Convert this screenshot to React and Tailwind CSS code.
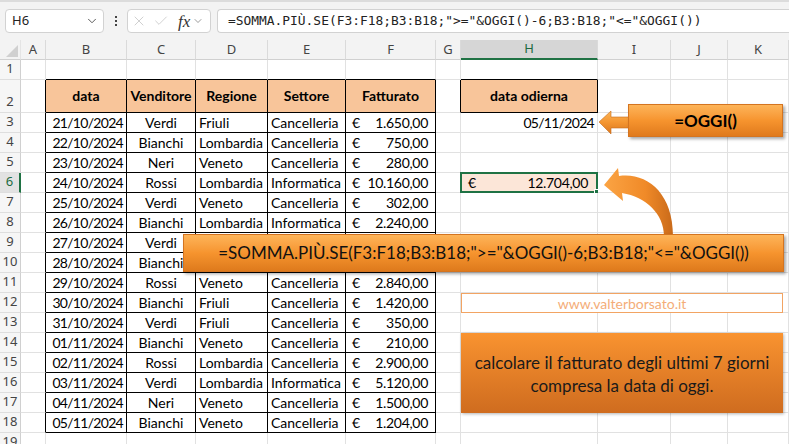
import React from "react";
import { ChevronDown, X, Check } from "lucide-react";

const COLS = ["", "A", "B", "C", "D", "E", "F", "G", "H", "I", "J", "K"];

const DATA = [
  ["21/10/2024", "Verdi", "Friuli", "Cancelleria", "1.650,00"],
  ["22/10/2024", "Bianchi", "Lombardia", "Cancelleria", "750,00"],
  ["23/10/2024", "Neri", "Veneto", "Cancelleria", "280,00"],
  ["24/10/2024", "Rossi", "Lombardia", "Informatica", "10.160,00"],
  ["25/10/2024", "Verdi", "Veneto", "Cancelleria", "302,00"],
  ["26/10/2024", "Bianchi", "Lombardia", "Informatica", "2.240,00"],
  ["27/10/2024", "Verdi", "Veneto", "Cancelleria", "980,00"],
  ["28/10/2024", "Bianchi", "Lombardia", "Cancelleria", "1.100,00"],
  ["29/10/2024", "Rossi", "Veneto", "Cancelleria", "2.840,00"],
  ["30/10/2024", "Bianchi", "Friuli", "Cancelleria", "1.420,00"],
  ["31/10/2024", "Verdi", "Friuli", "Cancelleria", "350,00"],
  ["01/11/2024", "Bianchi", "Veneto", "Cancelleria", "210,00"],
  ["02/11/2024", "Rossi", "Lombardia", "Cancelleria", "2.900,00"],
  ["03/11/2024", "Verdi", "Lombardia", "Informatica", "5.120,00"],
  ["04/11/2024", "Neri", "Veneto", "Cancelleria", "1.500,00"],
  ["05/11/2024", "Bianchi", "Veneto", "Cancelleria", "1.204,00"],
];

const HEADERS = ["data", "Venditore", "Regione", "Settore", "Fatturato"];

function inBox(r, c) {
  return (r >= 2 && r <= 18 && c >= 2 && c <= 6) || (r === 2 && c === 8);
}

function cellContent(r, c) {
  if (r === 2 && c >= 2 && c <= 6) {
    return (
      <div className="w-full h-full flex items-center justify-center font-bold">
        {HEADERS[c - 2]}
      </div>
    );
  }
  if (r === 2 && c === 8) {
    return (
      <div className="w-full h-full flex items-center justify-center font-bold">
        data odierna
      </div>
    );
  }
  if (r === 3 && c === 8) {
    return (
      <div className="w-full h-full flex items-center justify-end pr-[3px] tracking-[-0.7px]">
        05/11/2024
      </div>
    );
  }
  if (r === 6 && c === 8) {
    return (
      <div className="w-full h-full flex items-center justify-between pl-[7px] pr-[9px]">
        <span>€</span>
        <span className="tracking-[-0.3px]">12.704,00</span>
      </div>
    );
  }
  if (r >= 3 && r <= 18 && c >= 2 && c <= 6) {
    const row = DATA[r - 3];
    if (c === 2)
      return (
        <div className="w-full h-full flex items-center justify-end pr-[3px] tracking-[-0.7px]">
          {row[0]}
        </div>
      );
    if (c === 3)
      return <div className="w-full h-full flex items-center justify-center">{row[1]}</div>;
    if (c === 4)
      return <div className="w-full h-full flex items-center pl-[3px]">{row[2]}</div>;
    if (c === 5)
      return <div className="w-full h-full flex items-center pl-[3px]">{row[3]}</div>;
    if (c === 6)
      return (
        <div className="w-full h-full flex items-center justify-between pl-[6px] pr-[7px]">
          <span>€</span>
          <span className="tracking-[-0.3px]">{row[4]}</span>
        </div>
      );
  }
  return null;
}

function Grid() {
  const cells = [];
  COLS.forEach((name, c) => {
    const isH = c === 8;
    cells.push(
      <div
        key={"h" + c}
        className={
          "h-[20px] flex items-center justify-center text-[13px] font-['Noto_Sans',sans-serif] border-r " +
          (c === 0 ? "border-r-[#e4e4e4] bg-[#f3f3f3] relative " : "border-r-[#dadada] ") +
          (isH
            ? "bg-[#d6d6d6] text-[#1d6a3f] border-b-2 border-b-[#1f7244]"
            : "bg-[#f3f3f3] text-[#444] border-b border-b-[#d0d0d0]")
        }
      >
        {c === 0 ? (
          <svg className="absolute right-[2px] bottom-[2px]" width="12" height="12" viewBox="0 0 12 12">
            <polygon points="12,0 12,12 0,12" fill="#d0d0d0" />
          </svg>
        ) : (
          name
        )}
      </div>
    );
  });

  for (let r = 1; r <= 19; r++) {
    const h = r === 2 ? "h-[33px]" : "h-[20px]";
    for (let c = 0; c < 12; c++) {
      if (c === 0) {
        const sel = r === 6;
        cells.push(
          <div
            key={r + "-" + c}
            className={
              h +
              " flex items-end justify-center pb-[1px] text-[13px] font-['Noto_Sans',sans-serif] border-b border-b-[#dedede] " +
              (sel
                ? "bg-[#e2e2e2] text-[#1d6a3f] border-r-2 border-r-[#1f7244]"
                : "bg-[#f6f6f6] text-[#444] border-r border-r-[#d0d0d0]")
            }
          >
            {r}
          </div>
        );
        continue;
      }
      const blackR = inBox(r, c) || inBox(r, c + 1);
      const blackB = inBox(r, c) || inBox(r + 1, c);
      let bg = "bg-white";
      if ((r === 2 && c >= 2 && c <= 6) || (r === 2 && c === 8)) bg = "bg-[#f8c59a]";
      if (r === 6 && c === 8) bg = "bg-[#fce6d8]";
      cells.push(
        <div
          key={r + "-" + c}
          className={
            h +
            " relative border-r border-b text-[14px] leading-none text-black whitespace-nowrap " +
            bg +
            " " +
            (blackR ? "border-r-black" : "border-r-[#e1e1e1]") +
            " " +
            (blackB ? "border-b-black" : "border-b-[#e1e1e1]")
          }
        >
          {cellContent(r, c)}
          {r === 6 && c === 8 && (
            <>
              <div className="absolute -left-[1px] -top-[1px] -right-[1px] -bottom-[1px] border-2 border-[#1f7244]" />
              <div className="absolute -right-[3px] -bottom-[3px] w-[6px] h-[6px] bg-[#1f7244] border border-white" />
            </>
          )}
        </div>
      );
    }
  }

  return (
    <div className="grid grid-cols-[21px_25px_81px_69px_72px_78px_90px_25px_137px_73px_57px_61px] font-['Lato',sans-serif]">
      {cells}
    </div>
  );
}

function FormulaBar() {
  return (
    <div className="h-[40px] bg-[#f3f3f3] flex flex-col">
      <div className="h-[2px] bg-[#dcdcdc]" />
      <div className="flex items-start pt-[7px]">
        <div className="ml-[5px] w-[99px] h-[24px] bg-white border border-[#d2d2d2] rounded-[4px] flex items-center justify-between pl-[6px] pr-[4px] text-[13px] text-[#222] font-['Noto_Sans',sans-serif]">
          <span>H6</span>
          <ChevronDown size={14} strokeWidth={1.5} color="#444" />
        </div>
        <div className="ml-[11px] h-[24px] flex flex-col justify-center gap-[2px]">
          <div className="w-[2px] h-[2px] bg-[#444]" />
          <div className="w-[2px] h-[2px] bg-[#444]" />
          <div className="w-[2px] h-[2px] bg-[#444]" />
        </div>
        <div className="ml-[10px] w-[84px] h-[24px] bg-white border border-[#d2d2d2] rounded-[4px] flex items-center pl-[3px]">
          <X size={16} strokeWidth={1.2} color="#c4c4c4" />
          <Check size={16} strokeWidth={1.2} color="#c4c4c4" className="ml-[6px]" />
          <span className="ml-[9px] text-[17px] italic font-['Liberation_Serif',serif] text-[#333] leading-none">fx</span>
          <ChevronDown size={12} strokeWidth={1.3} color="#666" className="ml-[2px]" />
        </div>
        <div className="ml-[6px] flex-1 h-[24px] bg-white border border-r-0 border-[#d2d2d2] rounded-l-[4px] flex items-center pl-[10px] text-[12.9px] text-[#222] font-['DejaVu_Sans_Mono',monospace] whitespace-nowrap">
          =SOMMA.PIÙ.SE(F3:F18;B3:B18;"&gt;="&amp;OGGI()-6;B3:B18;"&lt;="&amp;OGGI())
        </div>
      </div>
    </div>
  );
}

function Arrows() {
  return (
    <svg className="absolute left-0 top-0 pointer-events-none" width="789" height="444" viewBox="0 0 789 444">
      <defs>
        <linearGradient id="ga" x1="0" y1="0" x2="0" y2="1">
          <stop offset="0" stopColor="#fbb558" />
          <stop offset="0.5" stopColor="#f49530" />
          <stop offset="1" stopColor="#d9761e" />
        </linearGradient>
        <linearGradient id="gc" x1="0" y1="0" x2="1" y2="0">
          <stop offset="0" stopColor="#fba444" />
          <stop offset="0.6" stopColor="#f08a28" />
          <stop offset="1" stopColor="#c96a1a" />
        </linearGradient>
      </defs>
      <polygon
        points="599,122 611,111 611,117 630,117 630,128 611,128 611,134"
        fill="url(#ga)"
        stroke="#c66d1d"
        strokeWidth="0.6"
      />
      <path
        d="M604 185 L618 168 L619 176 C646 172 673 192 673 236 L664 236 C664 214 646 197 622 193 L623 201 Z"
        fill="url(#gc)"
      />
    </svg>
  );
}

export default function App() {
  return (
    <div className="relative w-[789px] h-[444px] overflow-hidden bg-white">
      <FormulaBar />
      <Grid />
      <Arrows />
      <div className="absolute left-[628px] top-[104px] w-[155px] h-[33px] bg-gradient-to-b from-[#fdb458] via-[#f6942e] to-[#e07a1c] border border-[#d47420] shadow-[2px_2px_3px_rgba(0,0,0,0.35)] flex items-center justify-center font-['Lato',sans-serif] font-bold text-[17px] text-black">
        =OGGI()
      </div>
      <div className="absolute left-[183px] top-[234px] w-[601px] h-[38px] bg-gradient-to-b from-[#fdb458] via-[#f6942e] to-[#de7a1c] border border-[#d47420] shadow-[2px_2px_3px_rgba(0,0,0,0.35)] flex items-center justify-center font-['Lato',sans-serif] text-[17px] text-[#111] whitespace-nowrap">
        =SOMMA.PIÙ.SE(F3:F18;B3:B18;"&gt;="&amp;OGGI()-6;B3:B18;"&lt;="&amp;OGGI())
      </div>
      <div className="absolute left-[461px] top-[293px] w-[322px] h-[20px] bg-white border border-[#f2a463] flex items-center justify-center font-['Lato',sans-serif] text-[14px] text-[#f4ad78]">
        www.valterborsato.it
      </div>
      <div className="absolute left-[461px] top-[333px] w-[322px] h-[80px] bg-gradient-to-b from-[#f99330] to-[#cf6c1f] shadow-[1px_1px_3px_rgba(0,0,0,0.3)] flex flex-col items-center justify-center font-['Lato',sans-serif] text-[17px] leading-[23px] text-[#1a1a1a] pt-[2px]">
        <span>calcolare il fatturato degli ultimi 7 giorni</span>
        <span>compresa la data di oggi.</span>
      </div>
    </div>
  );
}
